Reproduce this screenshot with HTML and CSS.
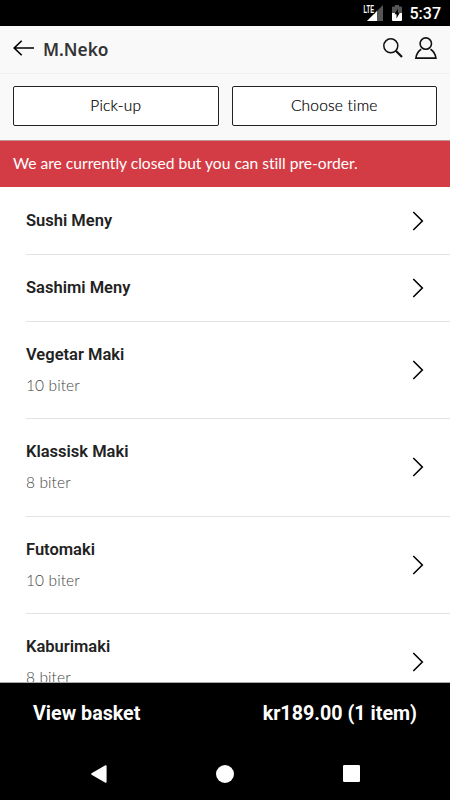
FILE: index.html
```html
<!DOCTYPE html>
<html lang="en">
<head>
    <meta charset="UTF-8">
    <meta name="viewport" content="width=device-width, initial-scale=1.0">
    <title>M.Neko</title>
    <link rel="stylesheet" href="styles.css">
</head>
<body>
    <svg class="sprite" width="0" height="0">
        <symbol id="chevron" viewBox="0 0 12 20">
            <path d="M1.3 1 L10.3 10 L1.3 19" fill="none" stroke="#000" stroke-width="1.6"/>
        </symbol>
    </svg>

    <div class="status-bar">
        <svg class="signal" width="21" height="18" viewBox="0 0 21 18">
            <path d="M4 17 L20 1 V17 Z" fill="#555"/>
            <path d="M4 17 L14 7 V17 Z" fill="#fff"/>
            <path d="M0 0 H12 V9.5 H0 Z" fill="#000"/>
            <text x="0.5" y="8.8" textLength="10.5" lengthAdjust="spacingAndGlyphs">LTE</text>
        </svg>
        <svg class="battery" width="10" height="16" viewBox="0 0 10 16">
            <path d="M0 2.5 Q0 1.6 1 1.6 H3 V0 H7 V1.6 H9 Q10 1.6 10 2.5 V8 H0 Z" fill="#555"/>
            <path d="M0 8 H10 V15 Q10 16 9 16 H1 Q0 16 0 15 Z" fill="#fff"/>
            <path d="M6 3.5 L2.5 9.2 H4.5 V13.5 L7.8 7.8 H6 Z" fill="#000"/>
        </svg>
        <span class="clock">5:37</span>
    </div>

    <div class="header">
        <svg class="back" width="22" height="16" viewBox="0 0 22 16">
            <path d="M21 8 H1.2 M8.7 0.7 L1.2 8 L8.7 15.3" fill="none" stroke="#000" stroke-width="1.6"/>
        </svg>
        <h1>M.Neko</h1>
        <svg class="search" width="20" height="20" viewBox="0 0 20 20">
            <circle cx="7.8" cy="7.8" r="7" fill="none" stroke="#111" stroke-width="1.5"/>
            <path d="M12.8 12.8 L19 19" stroke="#111" stroke-width="2.2"/>
        </svg>
        <svg class="user" width="22" height="22" viewBox="0 0 22 22" fill="none" stroke="#111" stroke-width="1.6">
            <circle cx="10.8" cy="6.6" r="5.7"/>
            <path d="M6.2 12.2 C3.3 14 1.4 17 0.9 21.1 H20.9 C20.4 17 18.4 14 15.5 12.2"/>
        </svg>
    </div>

    <div class="options">
        <button>Pick-up</button>
        <button>Choose time</button>
    </div>

    <div class="notice"><span>We are currently closed but you can still pre-order.</span></div>

    <div class="menu">
        <div class="category">
            <h2>Sushi Meny</h2>
            <svg class="chevron"><use href="#chevron"/></svg>
        </div>
        <div class="category">
            <h2>Sashimi Meny</h2>
            <svg class="chevron"><use href="#chevron"/></svg>
        </div>
        <div class="category detailed">
            <div>
                <h2>Vegetar Maki</h2>
                <p>10 biter</p>
            </div>
            <svg class="chevron"><use href="#chevron"/></svg>
        </div>
        <div class="category detailed">
            <div>
                <h2>Klassisk Maki</h2>
                <p>8 biter</p>
            </div>
            <svg class="chevron"><use href="#chevron"/></svg>
        </div>
        <div class="category detailed">
            <div>
                <h2>Futomaki</h2>
                <p>10 biter</p>
            </div>
            <svg class="chevron"><use href="#chevron"/></svg>
        </div>
        <div class="category detailed">
            <div>
                <h2>Kaburimaki</h2>
                <p>8 biter</p>
            </div>
            <svg class="chevron"><use href="#chevron"/></svg>
        </div>
    </div>

    <div class="basket">
        <span class="basket-label">View basket</span>
        <span class="basket-total">kr189.00 (1 item)</span>
    </div>

    <div class="nav-bar">
        <svg width="16" height="18" viewBox="0 0 16 18">
            <path d="M14.8 1 V17 L1 9 Z" fill="#fff" stroke="#fff" stroke-width="1.6" stroke-linejoin="round"/>
        </svg>
        <svg width="18" height="18" viewBox="0 0 18 18">
            <circle cx="9" cy="9" r="9" fill="#fff"/>
        </svg>
        <svg width="17" height="17" viewBox="0 0 17 17">
            <rect width="17" height="17" rx="1.2" fill="#fff"/>
        </svg>
    </div>
</body>
</html>
```
FILE: styles.css
```css
* {
    box-sizing: border-box;
}

body {
    font-family: Roboto, sans-serif;
    margin: 0;
    height: 800px;
    display: flex;
    flex-direction: column;
    overflow: hidden;
    background-color: #fff;
    color: #222;
}

svg {
    display: block;
    flex-shrink: 0;
}

.sprite {
    position: absolute;
}

.status-bar {
    flex: 0 0 26px;
    display: flex;
    align-items: center;
    justify-content: flex-end;
    padding-right: 9px;
    background-color: #000;
    color: #fff;
}

.signal text {
    font: bold 11px "Liberation Sans", sans-serif;
    fill: #fff;
}

.battery {
    margin: 0 8px 0 8px;
}

.clock {
    font-size: 16px;
    font-weight: 500;
    line-height: 22px;
    padding-top: 1px;
}

.header {
    flex: 0 0 48px;
    display: flex;
    align-items: center;
    padding: 0 13px;
    background-color: #f9f9f9;
    border-bottom: 1px solid #f1f1f1;
}

.back {
    margin-top: -3px;
}

h1 {
    flex: 1;
    margin: 0 0 0 8px;
    font-family: "Noto Sans", sans-serif;
    font-size: 17.3px;
    font-weight: 600;
    line-height: 24px;
    color: #333;
}

.search {
    margin: -3px 12px 0 0;
}

.user {
    margin-top: -3px;
}

.options {
    flex: 0 0 66px;
    display: flex;
    gap: 13px;
    padding: 12px 13px 14px;
    background-color: #f9f9f9;
}

.options button {
    flex: 1;
    padding: 0 0 2px;
    border: 1px solid #222;
    border-radius: 2px;
    background-color: #fff;
    color: #000;
    font-family: Lato, sans-serif;
    font-size: 15.5px;
    font-weight: 300;
    font-variant-ligatures: none;
    letter-spacing: 0.2px;
    -webkit-text-stroke: 0.2px #000;
}

.notice {
    flex: 0 0 47px;
    display: flex;
    align-items: center;
    padding: 0 13px 2px;
    border-top: 1px solid #bc9396;
    background-color: #d43c45;
    color: #fff;
    font-family: Lato, sans-serif;
    font-size: 15.6px;
    font-variant-ligatures: none;
}

.menu {
    flex: 1;
    min-height: 0;
    overflow: hidden;
    padding: 1px 0 0 26px;
    border-bottom: 1px solid #aaa;
}

.category {
    display: flex;
    align-items: center;
    justify-content: space-between;
    height: 67px;
    padding-right: 26px;
    border-bottom: 1px solid #e2e2e2;
}

.category.detailed {
    height: 97.33px;
}

h2 {
    margin: 0;
    font-size: 16.5px;
    font-weight: 600;
    line-height: 20px;
}

.category p {
    margin: 10px 0 0;
    font-family: Lato, sans-serif;
    font-size: 15.5px;
    font-weight: 300;
    letter-spacing: 0.1px;
    line-height: 20px;
    color: #444;
}

.chevron {
    width: 12px;
    height: 20px;
}

.basket {
    flex: 0 0 60px;
    display: flex;
    align-items: center;
    justify-content: space-between;
    padding: 0 33px;
    background-color: #000;
    color: #fff;
    font-size: 19.7px;
    font-weight: 700;
}

.nav-bar {
    flex: 0 0 57px;
    display: flex;
    align-items: center;
    justify-content: space-between;
    padding: 4px 90px 0 91px;
    background-color: #000;
}
```
